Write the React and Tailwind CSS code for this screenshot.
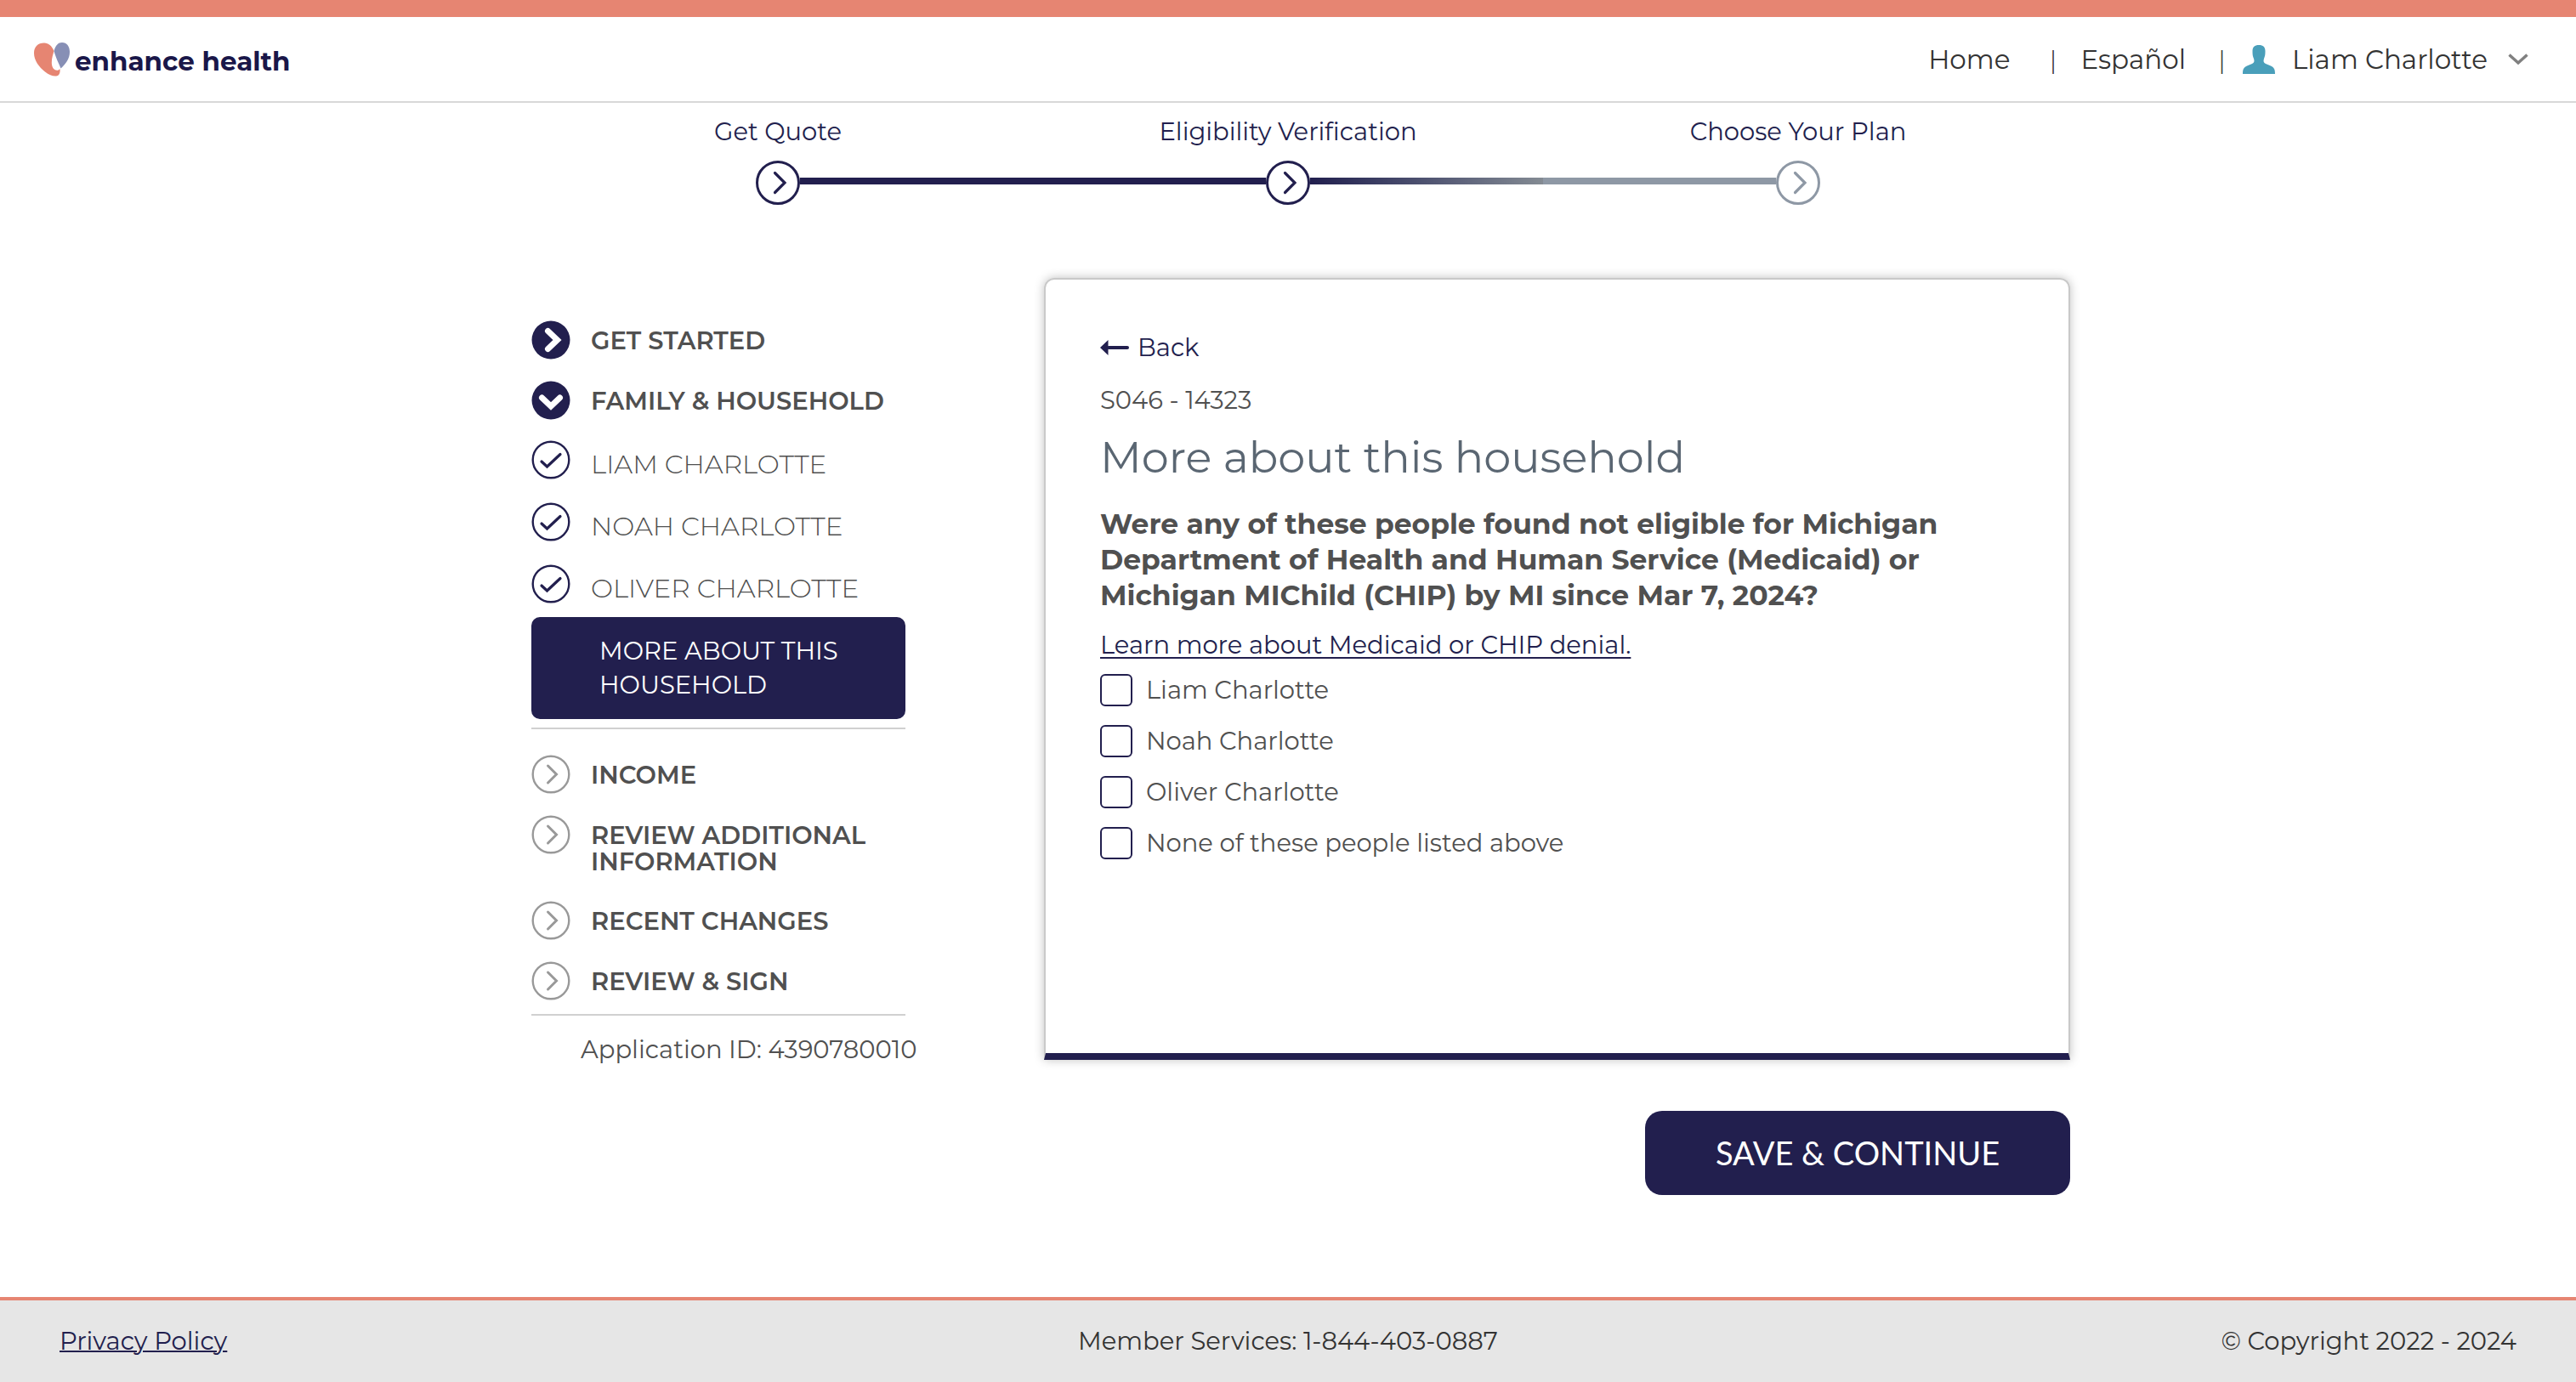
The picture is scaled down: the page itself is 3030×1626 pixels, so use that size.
const NAVY = "#221f4e";

function CircleIcon({ kind, className }) {
  const filled = kind === "done" || kind === "open";
  const color = kind === "todo" ? "#999999" : NAVY;
  return (
    <svg viewBox="0 0 46 46" className={className} fill="none" strokeLinecap="round" strokeLinejoin="miter" aria-hidden="true">
      <circle cx="23" cy="23" r={filled ? 22.5 : 21.3} fill={filled ? NAVY : "none"} stroke={filled ? "none" : color} strokeWidth="2.4" />
      {kind === "done" && <path d="M19.5 12.5 L30.5 23 L19.5 33.5" stroke="#fff" strokeWidth="7" />}
      {kind === "open" && <path d="M12.5 20 L23 30 L33.500 20" stroke="#fff" strokeWidth="7" />}
      {kind === "check" && <path d="M12 25 L18.500 31 L34 16.500" stroke={color} strokeWidth="3.200" />}
      {kind === "todo" && <path d="M19.500 13 L29.500 23 L19.500 33" stroke={color} strokeWidth="3" />}
    </svg>
  );
}

function StepIcon({ color }) {
  return (
    <svg viewBox="0 0 52 52" className="size-13 shrink-0" fill="none" aria-hidden="true">
      <circle cx="26" cy="26" r="24.5" fill="#fff" stroke={color} strokeWidth="3" />
      <path d="M22.500 14.500 L34 26 L22.500 37.500" stroke={color} strokeWidth="3.200" strokeLinecap="round" />
    </svg>
  );
}

function Logo() {
  return (
    <a href="#home" className="flex items-center gap-[6px] text-[#1a1749]" aria-label="enhance health">
      <svg viewBox="0 0 42 40" className="h-10 w-[42px]" aria-hidden="true">
        <path d="M23.500 10 C21 4 17 0.500 12 0.500 C4.500 0.500 0 5 0 12.500 C0 21 6 29 13 34.500 C17.500 38 22 39.800 26 39.500 C29.500 39.200 31 36 30.500 31 C28 34.500 21 33 20.800 24 C20.700 18 22.500 14 23.500 10 Z" fill="#e68572" />
        <path d="M23.500 10 C25.500 3 28.500 0 33 0 C38.500 0 42 4.500 42 11 C42 19 37.500 25 31.500 30.500 C29 24 26 19 23.500 10 Z" fill="#878fb5" />
      </svg>
      <span className="pt-1 text-[31px] leading-9 font-bold">enhance health</span>
    </a>
  );
}

function Header() {
  return (
    <header className="flex h-[121px] items-center justify-between border-t-[20px] border-b-2 border-t-[#e68572] border-b-[#d8d8d8] pl-10 pr-[56px]">
      <Logo />
      <nav className="flex items-center text-[31px] leading-9 text-[#333]">
        <a href="#home">Home</a>
        <span className="mr-7 ml-[46px] font-light">|</span>
        <a href="#es">Español</a>
        <span className="mr-5 ml-[38px] font-light">|</span>
        <button type="button" className="flex items-center">
          <svg viewBox="0 0 38 34" className="mr-5 h-[34px] w-[38px]" fill="#4a9fba" aria-hidden="true">
            <path d="M19 0 C24 0 26.500 2.500 26.500 7 C26.500 12 26 13.500 25 16 C24 19 24.500 21 27 22 L33 24.500 C37 26.500 38 28.500 38 34 L0 34 C0 28.500 1 26.500 5 24.500 L11 22 C13.500 21 14 19 13 16 C12 13.500 11.500 12 11.500 7 C11.500 2.500 14 0 19 0 Z" />
          </svg>
          Liam Charlotte
          <svg viewBox="0 0 24 14" className="ml-6 h-[14px] w-6" fill="none" stroke="#808080" strokeWidth="3.500" aria-hidden="true">
            <path d="M1.500 1.500 L12 11 L22.500 1.500" />
          </svg>
        </button>
      </nav>
    </header>
  );
}

function Stepper() {
  return (
    <div className="mx-auto mt-4 w-full max-w-[1600px]">
      <ol className="grid grid-cols-[1fr_600px_1fr] text-[29px] leading-9 text-[#221f4e]">
        <li className="flex w-[400px] justify-center">Get Quote</li>
        <li className="text-center">Eligibility Verification</li>
        <li className="ml-auto flex w-[400px] justify-center">Choose Your Plan</li>
      </ol>
      <div className="mx-[174px] mt-4 flex items-center">
        <StepIcon color={NAVY} />
        <div className="-mt-1 h-2 flex-1 bg-[#221f4e]" />
        <StepIcon color={NAVY} />
        <div className="-mt-1 flex h-2 flex-1">
          <div className="flex-1 bg-linear-to-r from-[#221f4e] to-[#848b93]" />
          <div className="flex-1 bg-[#8e98a5]" />
        </div>
        <StepIcon color="#8e98a5" />
      </div>
    </div>
  );
}

function NavRow({ kind, children }) {
  return (
    <li>
      <a href="#section" className="flex items-start gap-6">
        <CircleIcon kind={kind} className="size-[46px] shrink-0" />
        <span className="pt-2 pb-[6px] text-[29px] leading-[31px] font-semibold">{children}</span>
      </a>
    </li>
  );
}

function Sidebar() {
  const people = ["LIAM CHARLOTTE", "NOAH CHARLOTTE", "OLIVER CHARLOTTE"];
  return (
    <aside className="mt-[50px] w-[440px] shrink-0 text-[#505050]">
      <ul className="flex flex-col gap-[25px]">
        <NavRow kind="done">GET STARTED</NavRow>
        <NavRow kind="open">FAMILY &amp; HOUSEHOLD</NavRow>
      </ul>
      <ul className="mt-6 flex flex-col gap-[27px]">
        {people.map((p) => (
          <li key={p}>
            <a href="#person" className="flex items-start gap-6">
              <CircleIcon kind="check" className="size-[46px] shrink-0" />
              <span className="pt-[11px] text-[31px] leading-[35px] font-light">{p}</span>
            </a>
          </li>
        ))}
      </ul>
      <a href="#more" className="mt-4 block rounded-[10px] bg-[#221f4e] py-5 pr-8 pl-20 text-[29px] leading-10 text-white">
        MORE ABOUT THIS HOUSEHOLD
      </a>
      <hr className="mt-[10px] border-t-2 border-[#d0d0d0]" />
      <ul className="mt-[30px] flex flex-col gap-[25px]">
        <NavRow kind="todo">INCOME</NavRow>
        <NavRow kind="todo">REVIEW ADDITIONAL INFORMATION</NavRow>
        <NavRow kind="todo">RECENT CHANGES</NavRow>
        <NavRow kind="todo">REVIEW &amp; SIGN</NavRow>
      </ul>
      <hr className="mt-4 border-t-2 border-[#d0d0d0]" />
      <p className="mt-[22px] pl-[58px] text-[29px] leading-9 whitespace-nowrap">Application ID: 4390780010</p>
    </aside>
  );
}

function Question() {
  const options = ["Liam Charlotte", "Noah Charlotte", "Oliver Charlotte", "None of these people listed above"];
  return (
    <section className="min-h-[920px] rounded-t-[12px] border-2 border-b-8 border-[#c9c9c9] border-b-[#221f4e] px-16 pt-[62px] text-[29px] leading-9 text-[#505050] shadow-[0_0_12px_rgba(0,0,0,0.25)]">
      <button type="button" className="flex items-center gap-[10px] text-[#221f4e]">
        <svg viewBox="0 0 34 18" className="h-[18px] w-[34px]" fill={NAVY} aria-hidden="true">
          <path d="M0 9 L9.500 0 V18 Z" />
          <rect x="8" y="7" width="26" height="4" rx="2" />
        </svg>
        Back
      </button>
      <p className="mt-[26px]">S046 - 14323</p>
      <h1 className="mt-4 text-[51px] leading-[66px] text-[#5a6672]">More about this household</h1>
      <fieldset className="mt-6">
        <legend className="max-w-[1040px] text-[33px] leading-[42px] font-bold">
          Were any of these people found not eligible for Michigan Department of Health and Human Service (Medicaid) or Michigan MIChild (CHIP) by MI since Mar 7, 2024?
        </legend>
        <a href="#learn" className="mt-5 inline-block text-[#221f4e] underline decoration-2 underline-offset-4">
          Learn more about Medicaid or CHIP denial.
        </a>
        <div className="mt-4 flex flex-col gap-[22px]">
          {options.map((o) => (
            <label key={o} className="flex items-center gap-4">
              <input type="checkbox" className="size-[38px] appearance-none rounded-[6px] border-2 border-[#221f4e] checked:bg-[#221f4e]" />
              {o}
            </label>
          ))}
        </div>
      </fieldset>
    </section>
  );
}

export default function App() {
  return (
    <div className="flex min-h-screen flex-col bg-white font-['Montserrat','Inter',sans-serif]">
      <Header />
      <Stepper />
      <main className="mx-auto mt-[86px] flex w-full max-w-[1840px] flex-1 items-start gap-[163px] pl-[30px]">
        <Sidebar />
        <div className="min-w-0 flex-1">
          <Question />
          <div className="mt-[60px] flex justify-end">
            <button type="button" className="h-[99px] w-[500px] rounded-[20px] bg-[#221f4e] font-['Lato',sans-serif] text-[38px] text-white">
              SAVE &amp; CONTINUE
            </button>
          </div>
        </div>
      </main>
      <footer className="grid h-[100px] grid-cols-3 items-center border-t-4 border-[#e68572] bg-[#e6e6e6] px-[70px] text-[29px] leading-9 text-[#333]">
        <a href="#privacy" className="justify-self-start text-[#221f4e] underline decoration-2">Privacy Policy</a>
        <p className="text-center">Member Services: 1-844-403-0887</p>
        <p className="text-right">© Copyright 2022 - 2024</p>
      </footer>
    </div>
  );
}
